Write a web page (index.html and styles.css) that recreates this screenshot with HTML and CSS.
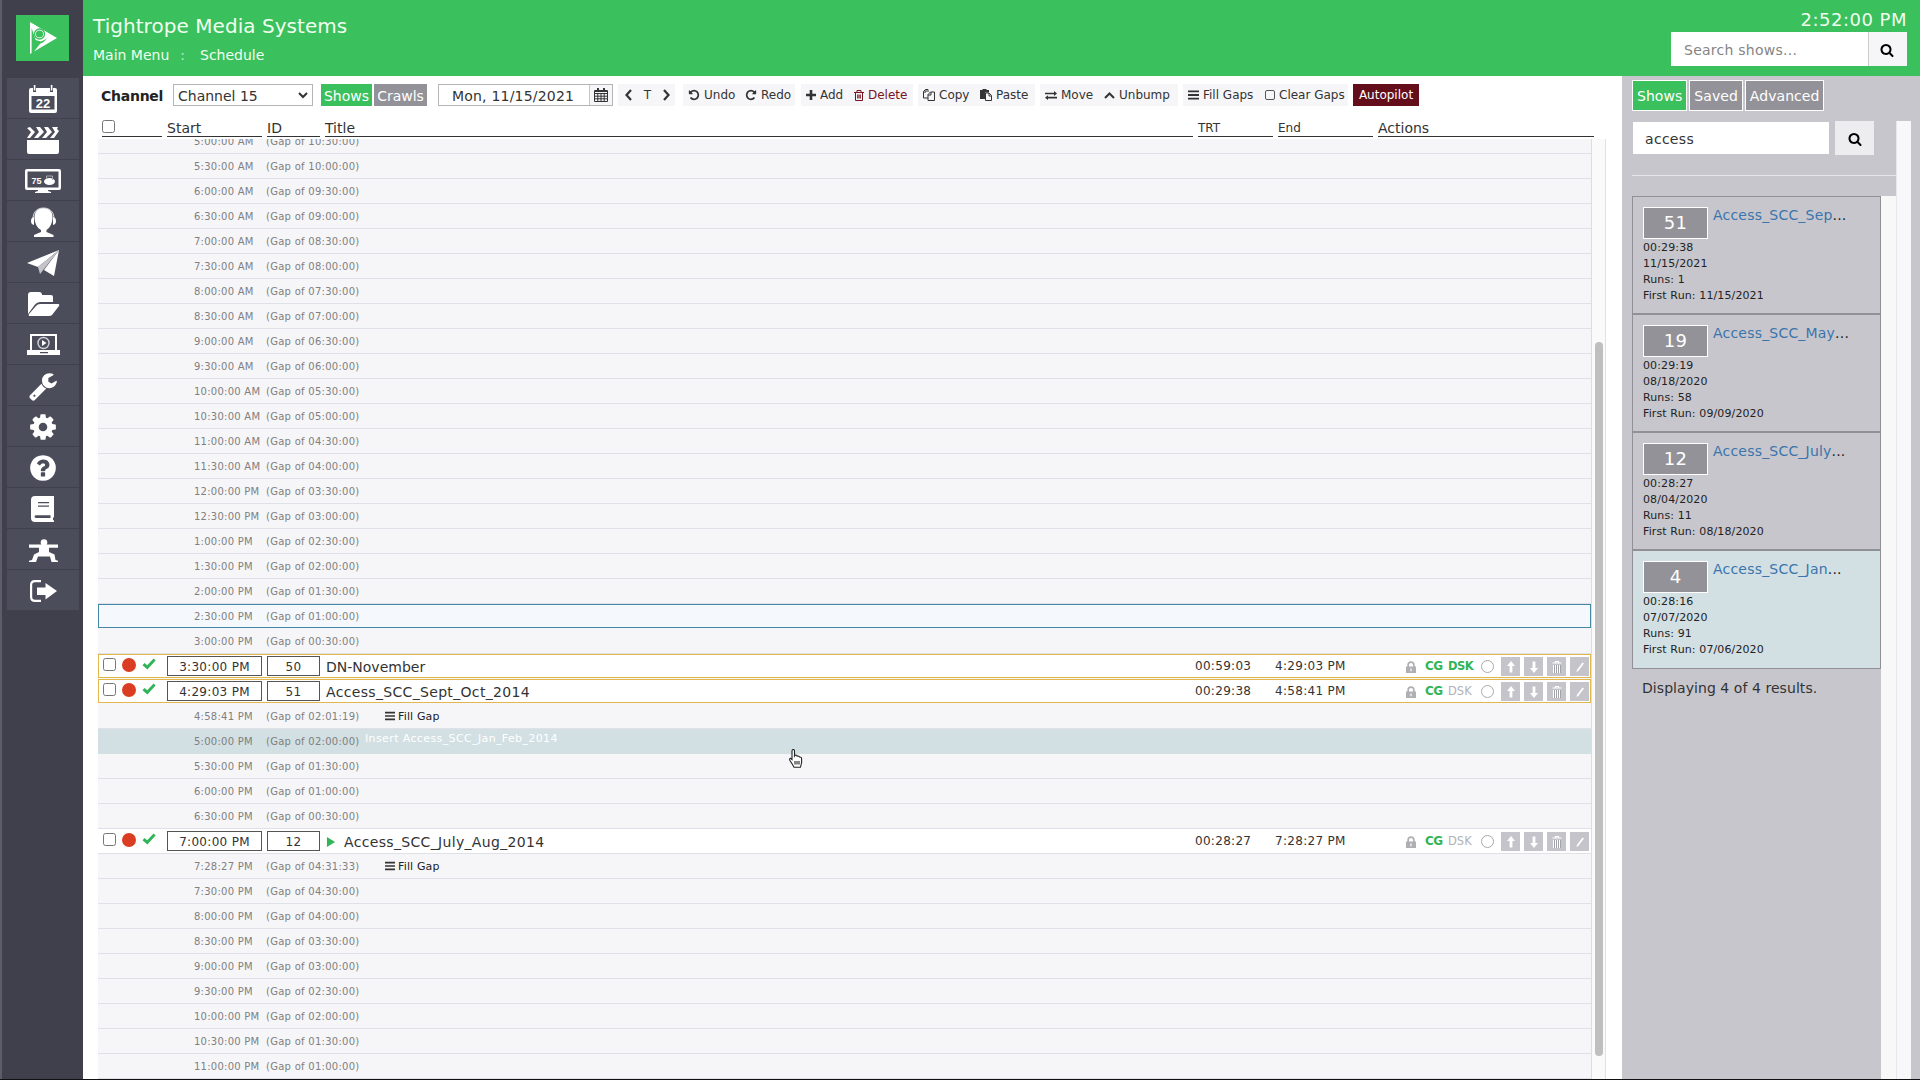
FILE: index.html
```
<!DOCTYPE html>
<html lang="en">
<head>
    <meta charset="UTF-8">
    <meta name="viewport" content="width=device-width, initial-scale=1.0">
    <title>Tightrope Media Systems - Schedule</title>
    <link rel="stylesheet" href="styles.css">
</head>
<body>
    <!-- Icon sprite -->
    <svg class="sprite" xmlns="http://www.w3.org/2000/svg">
        <symbol id="i-search" viewBox="0 0 1792 1792"><path d="M1216 832q0-185-131.5-316.5t-316.5-131.5-316.5 131.5-131.5 316.5 131.5 316.5 316.5 131.5 316.5-131.5 131.5-316.5zm512 832q0 52-38 90t-90 38q-54 0-90-38l-343-342q-179 124-399 124-143 0-273.5-55.5t-225-150-150-225-55.5-273.5 55.5-273.5 150-225 225-150 273.5-55.5 273.5 55.5 225 150 150 225 55.5 273.5q0 220-124 399l343 343q37 37 37 90z"/></symbol>
        <symbol id="i-undo" viewBox="0 0 1792 1792"><path d="M1664 896q0 156-61 298t-164 245-245 164-298 61q-172 0-327-72.5t-264-204.5q-7-10-6.5-22.5t8.5-20.5l137-138q10-9 25-9 16 2 23 12 73 95 179 147t225 52q104 0 198.5-40.5t163.5-109.5 109.5-163.5 40.5-198.5-40.5-198.5-109.5-163.5-163.5-109.5-198.5-40.5q-98 0-188 35.5t-160 101.5l137 138q31 30 14 69-17 40-59 40h-448q-26 0-45-19t-19-45v-448q0-42 40-59 39-17 69 14l130 129q107-101 244.5-156.5t284.5-55.5q156 0 298 61t245 164 164 245 61 298z"/></symbol>
        <symbol id="i-check" viewBox="0 0 14 12"><path d="M0.5 7.2 2.6 5l2.6 2.3L11.6 0.6 13.6 2.4 5.4 11.6z"/></symbol>
        <symbol id="i-lock" viewBox="0 0 10 12"><path fill-rule="evenodd" d="M0 5.5h1.3V4a3.7 3.7 0 0 1 7.4 0v1.5H10V12H0zM3 5.5h4V4a2 2 0 0 0-4 0zM4.4 7.5v2.8h1.2V7.5z"/></symbol>
        <symbol id="i-up" viewBox="0 0 10 12"><path d="M5 0 9 5H6.4v6.5H3.6V5H1z"/></symbol>
        <symbol id="i-trash-can" viewBox="0 0 10 12"><path d="M0.5 2h9M3.500 1.500v-1h3v1" fill="none" stroke="#fff" stroke-width="1.2"/><path d="M1.5 4v8M3.5 4v8M5.5 4v8M7.5 4v8" fill="none" stroke="#fff" stroke-width="1"/><path d="M2.5 4v8M4.5 4v8M6.5 4v8M8.5 4v8" fill="none" stroke="#8c8c92" stroke-width="0.6"/></symbol>
        <symbol id="i-edit" viewBox="0 0 10 12"><path d="M7.5 1.5 9 2.6 3.3 10 1.5 11l.4-2z"/></symbol>
        <symbol id="i-bars" viewBox="0 0 11 10"><path d="M0 0.4h11v1.8H0zM0 4.1h11v1.8H0zM0 7.8h11v1.8H0z"/></symbol>
        <symbol id="i-play" viewBox="0 0 9 11"><path d="M0 0 9 5.5 0 11z"/></symbol>
    </svg>

    <nav class="sidebar">
        <a class="logo" href="#">
            <svg width="28" height="33" viewBox="0 0 28 33"><path fill="#fff" d="M1 0 28 16 5 29.500 12.500 20 7 19 2.600 6V31L1 32z"/><circle cx="10.500" cy="12" r="5" fill="#fff" stroke="#3ac05c" stroke-width="1.300"/><circle cx="10.500" cy="12" r="3.600" fill="#3ac05c"/><path fill="#3ac05c" d="M3 17l9 2.500 6-3-4 4-9 3z"/></svg>
        </a>
        <ul class="menu">
            <li><svg width="30" height="28" viewBox="0 0 30 28"><path fill="#fff" fill-rule="evenodd" d="M3 3h2v4h3V3h14v4h3V3h2q2 0 2 2v21q0 2-2 2H3q-2 0-2-2V5q0-2 2-2zM3.500 11v13.500h23V11zM5.800 0h1.600v5.500H5.800zM22.800 0h1.600v5.500h-1.600z"/><text x="15" y="23" fill="#fff" class="cal-day">22</text></svg></li>
            <li><svg width="34" height="29" viewBox="0 0 34 29"><path fill="#fff" d="M1 14h32v12q0 2-2 2H3q-2 0-2-2zM1 2l3-1 5 5-5 6H1l4-6zM10 1h4l4 5-6 6H8l5-6zM18 1h4l4 5-6 6h-4l5-6zM26 1h6l-1 2 2 2-5 7h-4l5-6z"/></svg></li>
            <li><svg width="36" height="25" viewBox="0 0 36 25"><path fill="#fff" fill-rule="evenodd" d="M2 0h32q2 0 2 2v17q0 2-2 2H23v1l3 1v1H10v-1l3-1v-1H2q-2 0-2-2V2q0-2 2-2zM2.500 2.500v16h31v-16z"/><ellipse cx="24.500" cy="12.500" rx="5.500" ry="3.500" fill="#fff"/><path d="M21.500 10V7h6v4" fill="none" stroke="#a9a9b2"/><text x="11.500" y="15" fill="#fff" class="tv-temp">75</text></svg></li>
            <li><svg width="27" height="31" viewBox="0 0 27 31"><path fill="#fff" d="M13.500 1c6 0 9 4 9 9 0 6-2.500 11-6 13v2l7 3v2H4v-2l7-3v-2c-4-2-6.500-7-6.500-13 0-5 3-9 9-9z"/><path d="M3 12C3 4 8 1 13.500 1S24 4 24 12" fill="none" stroke="#dadade"/><path fill="#fff" d="M4 10v8q-3-.5-3-4t3-4zM23 10v8q3-.5 3-4t-3-4z"/></svg></li>
            <li><svg width="34" height="28" viewBox="0 0 34 28"><path fill="#fff" d="M33 1 28 27 18 21 33 1 12 18 1 14z"/><path fill="#c4c4ca" d="M33 1 12 18l2 7 4-5z"/></svg></li>
            <li><svg width="33" height="27" viewBox="0 0 33 27"><path fill="#fff" d="M1 23V4q0-3 3-3h8q3 0 3 3h9q2 0 2 2v5H13q-3 0-5 2.500z"/><path fill="#fff" d="M13 13h18q2 0 1 2l-7 9q-1 1-3 1H3q-2 0-1-2l7-8q1.500-2 4-2z"/></svg></li>
            <li><svg width="33" height="22" viewBox="0 0 33 22"><path fill="#fff" fill-rule="evenodd" d="M3 0h27v16h3v5H0v-5h3zM5 2v14h23V2zM13 18v1.200h8V18z"/><circle cx="16.500" cy="9" r="5.500" fill="none" stroke="#d0d0d6" stroke-width="1.400"/><path fill="#fff" d="M15 6l4.500 3-4.500 3z"/></svg></li>
            <li><svg width="30" height="30" viewBox="0 0 1792 1792"><path fill="#fff" d="M448 1472q0-26-19-45t-45-19-45 19-19 45 19 45 45 19 45-19 19-45zm644-420l-682 682q-37 37-90 37-52 0-91-37l-106-108q-38-36-38-90 0-53 38-91l681-681q39 98 114.500 173.500t173.500 114.500zm634-435q0 39-23 106-47 134-164.500 217.500t-258.500 83.500q-185 0-316.500-131.500t-131.500-316.500 131.500-316.500 316.500-131.500q58 0 121.500 16.500t107.500 46.500q16 11 16 28t-16 28l-293 169v224l193 107q5-3 79-48.500t135.500-81 70.500-35.500q15 0 23.500 10t8.500 25z"/></svg></li>
            <li><svg width="30" height="30" viewBox="0 0 1792 1792"><path fill="#fff" d="M1152 896q0-106-75-181t-181-75-181 75-75 181 75 181 181 75 181-75 75-181zm512-109v222q0 12-8 23t-20 13l-185 28q-19 54-39 91 35 50 107 138 10 12 10 25t-9 23q-27 37-99 108t-94 71q-12 0-26-9l-138-108q-44 23-91 38-16 136-29 186-7 28-36 28h-222q-14 0-24.500-8.500t-11.500-21.500l-28-184q-49-16-90-37l-141 107q-10 9-25 9-14 0-25-11-126-114-165-168-7-10-7-23 0-12 8-23 15-21 51-66.500t54-70.500q-27-50-41-99l-183-27q-13-2-21-12.500t-8-23.500v-222q0-12 8-23t19-13l186-28q14-46 39-92-40-57-107-138-10-12-10-24 0-10 9-23 26-36 98.500-107.500t94.500-71.500q13 0 26 10l138 107q44-23 91-38 16-136 29-186 7-28 36-28h222q14 0 24.500 8.500t11.500 21.500l28 184q49 16 90 37l142-107q9-9 24-9 13 0 25 10 129 119 165 170 7 8 7 22 0 12-8 23-15 21-51 66.500t-54 70.500q26 50 41 98l183 28q13 2 21 12.500t8 23.500z"/></svg></li>
            <li><svg width="30" height="30" viewBox="0 0 1792 1792"><path fill="#fff" d="M1024 1376v-192q0-14-9-23t-23-9h-192q-14 0-23 9t-9 23v192q0 14 9 23t23 9h192q14 0 23-9t9-23zm256-672q0-88-55.500-163t-138.500-116-170-41q-243 0-371 213-15 24 8 42l132 100q7 6 19 6 16 0 25-12 53-68 86-92 34-24 86-24 48 0 85.500 26t37.500 59q0 38-20 61t-68 45q-63 28-115.500 86.500t-52.500 125.500v36q0 14 9 23t23 9h192q14 0 23-9t9-23q0-19 21.500-49.500t54.500-49.500q32-18 49-28.500t46-35 44.500-48 28-60.500 12.500-81zm384 192q0 209-103 385.500t-279.500 279.500-385.500 103-385.500-103-279.500-279.500-103-385.500 103-385.500 279.500-279.500 385.500-103 385.500 103 279.500 279.500 103 385.500z"/></svg></li>
            <li><svg width="24" height="26" viewBox="0 0 24 26"><path fill="#fff" fill-rule="evenodd" d="M4 0h19v21l-1 1v2l1 .5V26H4q-4 0-4-4V4q0-4 4-4zM7 6v1.300h11V6zM7 9.500v1.300h11V9.500zM5.500 19.300q-2 0-2 1.200 0 1.500 2 1.500h14v-2.700z"/></svg></li>
            <li><svg width="29" height="23" viewBox="0 0 29 23"><circle cx="15" cy="3.500" r="3.300" fill="#fff"/><path fill="#fff" d="M0 5.500h29v3.300h-9V13l5.500 2.500 1 5.500 3 .8V23h-7l-1.500-5.500H9L7 23H0v-1.200l3-.8 2-5.500 5-2.500V8.800H0z"/></svg></li>
            <li><svg width="27" height="22" viewBox="0 0 27 22"><path fill="none" stroke="#fff" stroke-width="2.200" d="M11 1.100H5q-3.900 0-3.900 3.900v12q0 3.900 3.900 3.900h6"/><path fill="#fff" d="M7 7.500h8.500V3L27 11 15.500 19.500V15H7z"/></svg></li>
        </ul>
    </nav>

    <div class="page">
        <header class="topbar">
            <div class="branding">
                <h1>Tightrope Media Systems</h1>
                <p class="crumbs"><span>Main Menu</span><span class="sep">:</span><span>Schedule</span></p>
            </div>
            <div class="topbar-right">
                <div class="clock">2:52:00 PM</div>
                <div class="show-search">
                    <input type="text" placeholder="Search shows...">
                    <button type="button"><svg width="14" height="14"><use href="#i-search"/></svg></button>
                </div>
            </div>
        </header>

        <div class="content">
            <main class="schedule">
                <div class="toolbar">
                    <label>Channel</label>
                    <div class="select"><span>Channel 15</span><svg width="10" height="7" viewBox="0 0 10 7"><path d="M1 1l4 4 4-4" fill="none" stroke="#333" stroke-width="2"/></svg></div>
                    <button class="tab active shows">Shows</button>
                    <button class="tab crawls">Crawls</button>
                    <div class="date">
                        <span>Mon, 11/15/2021</span>
                        <i><svg width="14" height="14" viewBox="0 0 14 14"><path fill="none" stroke="#333" d="M.5 2.500h13v11H.5zM.5 5.500h13M.5 8.200h13M.5 10.800h13M3.800 5v8.500M7 5v8.500M10.200 5v8.500"/><path stroke="#333" stroke-width="2" d="M4 0v4M10 0v4M1 3h12"/></svg></i>
                    </div>
                    <div class="group nav">
                        <svg width="7" height="12" viewBox="0 0 7 12"><path d="M6 1 1.500 6 6 11" fill="none" stroke="#333" stroke-width="2.200"/></svg>
                        <span>T</span>
                        <svg width="7" height="12" viewBox="0 0 7 12"><path d="M1 1l4.500 5L1 11" fill="none" stroke="#333" stroke-width="2.200"/></svg>
                    </div>
                    <div class="group g-undo">
                        <span class="w56"><svg width="12" height="12"><use href="#i-undo"/></svg>Undo</span>
                        <span><svg class="flip" width="12" height="12"><use href="#i-undo"/></svg>Redo</span>
                    </div>
                    <div class="group g-add">
                        <span class="w48"><svg width="10" height="10" viewBox="0 0 10 10"><path d="M3.700 0h2.600v3.700H10v2.600H6.300V10H3.700V6.300H0V3.700h3.700z"/></svg>Add</span>
                        <span class="danger"><svg width="10" height="11" viewBox="0 0 10 11"><path fill="none" stroke="#7a1420" d="M0 2.500h10M3 2.500v-2h4v2M1.500 2.500v8h7v-8M3.700 4.500v4M5 4.500v4M6.300 4.500v4"/></svg>Delete</span>
                    </div>
                    <div class="group g-copy">
                        <span class="w57"><svg width="12" height="12" viewBox="0 0 12 12"><path class="outline" d="M5 3V.5H2.500l-2 2V9H5M3 .5V3H.5M7.500 3h4v8.500H5V5.500zM8 3v3H5"/></svg>Copy</span>
                        <span><svg width="12" height="12" viewBox="0 0 12 12"><path d="M0 1h2.500V0h4v1H9v2.500H5V10H0z"/><path class="outline" d="M5.500 4H9l2.500 2.500v5h-6zM9 4v3h2.500"/></svg>Paste</span>
                    </div>
                    <div class="group g-move">
                        <span class="w59"><svg width="12" height="9" viewBox="0 0 12 9"><path d="M0 1.700h9V0l3 2.500L9 5V3.300H0zM12 5.800H3V4.300L0 6.700 3 9V7.400h9z"/></svg>Move</span>
                        <span><svg width="11" height="7" viewBox="0 0 11 7"><path d="M1 6l4.500-4.500L10 6" fill="none" stroke="#333" stroke-width="2"/></svg>Unbump</span>
                    </div>
                    <div class="group g-gaps">
                        <span class="w77"><svg width="11" height="10"><use href="#i-bars"/></svg>Fill Gaps</span>
                        <span><svg width="10" height="10" viewBox="0 0 10 10"><rect x=".5" y=".5" width="9" height="9" rx="1.500" fill="none" stroke="#555"/></svg>Clear Gaps</span>
                    </div>
                    <button class="autopilot">Autopilot</button>
                </div>

                <div class="cols head">
                    <div><input type="checkbox"></div>
                    <div>Start</div>
                    <div>ID</div>
                    <div>Title</div>
                    <div class="small">TRT</div>
                    <div class="small">End</div>
                    <div>Actions</div>
                </div>

                <div class="scroller">
                    <div class="rows" id="rows"></div>
                    <div class="track"><div class="thumb"></div></div>
                </div>
            </main>

            <aside class="panel">
                <div class="tabs">
                    <button class="active">Shows</button>
                    <button>Saved</button>
                    <button>Advanced</button>
                </div>
                <div class="panel-body">
                    <div class="panel-main">
                        <div class="filter">
                            <input type="text" value="access">
                            <button type="button"><svg width="14" height="14"><use href="#i-search"/></svg></button>
                        </div>
                        <div class="results">
                            <div class="cards">
                                <div class="card">
                                    <div class="card-top"><b>51</b><a>Access_SCC_Sep</a>...</div>
                                    <p>00:29:38</p><p>11/15/2021</p><p>Runs: 1</p><p>First Run: 11/15/2021</p>
                                </div>
                                <div class="card">
                                    <div class="card-top"><b>19</b><a>Access_SCC_May</a>...</div>
                                    <p>00:29:19</p><p>08/18/2020</p><p>Runs: 58</p><p>First Run: 09/09/2020</p>
                                </div>
                                <div class="card">
                                    <div class="card-top"><b>12</b><a>Access_SCC_July</a>...</div>
                                    <p>00:28:27</p><p>08/04/2020</p><p>Runs: 11</p><p>First Run: 08/18/2020</p>
                                </div>
                                <div class="card selected">
                                    <div class="card-top"><b>4</b><a>Access_SCC_Jan</a>...</div>
                                    <p>00:28:16</p><p>07/07/2020</p><p>Runs: 91</p><p>First Run: 07/06/2020</p>
                                </div>
                                <div class="count">Displaying 4 of 4 results.</div>
                            </div>
                            <div class="inner-track"></div>
                        </div>
                    </div>
                    <div class="outer-track"></div>
                </div>
            </aside>
        </div>
    </div>

    <svg class="pointer" width="14" height="19" viewBox="0 0 14 19"><path fill="#fff" stroke="#222" stroke-width="1.100" d="M3 2q0-1.500 1.200-1.500T5.500 2v5l.5-.8q2-.4 2.200.9 1.800-.3 2.200.9 2.200-.2 2.200 1.800v4l-1.200 4.500H5L3.500 15.500.8 11.200Q.2 9.500 1.600 9.300L3 10.500zM6 12v3.500M8 12v3.500M10 12v3.500"/></svg>

    <script src="script.js"></script>
</body>
</html>
```
FILE: styles.css
```
* {
    box-sizing: border-box;
}

body {
    font-family: Verdana, "DejaVu Sans", sans-serif;
    margin: 0;
    display: flex;
    width: 1920px;
    height: 1080px;
    overflow: hidden;
    color: #333;
    background-color: #fff;
    border-bottom: 1px solid #111;
}

button, input {
    font-family: inherit;
}

h1, p, ul {
    margin: 0;
    padding: 0;
}

.sprite {
    position: absolute;
    width: 0;
    height: 0;
}

/* Sidebar */
.sidebar {
    width: 83px;
    background-color: #40404d;
    border-left: 2px solid #5b5d6b;
    padding-top: 15px;
}

.logo {
    display: flex;
    align-items: center;
    justify-content: center;
    width: 53px;
    height: 46px;
    margin-left: 14px;
    margin-bottom: 17px;
    background-color: #3ac05c;
}

.menu {
    list-style: none;
    margin-left: 5px;
    width: 72px;
}

.menu li {
    display: flex;
    align-items: center;
    justify-content: center;
    height: 41px;
    padding-top: 2px;
    background-color: #4c4d5b;
    border-bottom: 1px solid #40414d;
}

.cal-day {
    font: bold 13px "Liberation Sans", sans-serif;
    text-anchor: middle;
}

.tv-temp {
    font: bold 9px "Liberation Sans", sans-serif;
    text-anchor: middle;
}

.page {
    width: 1837px;
    display: flex;
    flex-direction: column;
}

/* Header */
.topbar {
    display: flex;
    justify-content: space-between;
    height: 76px;
    flex-shrink: 0;
    padding: 0 13px 0 10px;
    background-color: #3ac05c;
    color: #effff0;
}

.topbar h1 {
    font-size: 20px;
    font-weight: normal;
    line-height: 24px;
    margin-top: 14px;
    letter-spacing: 0.05px;
}

.crumbs {
    font-size: 14px;
    line-height: 18px;
    margin-top: 8px;
}

.crumbs .sep {
    margin: 0 15px 0 11px;
    opacity: 0.7;
}

.clock {
    font-size: 18px;
    line-height: 22px;
    margin-top: 9px;
    text-align: right;
    letter-spacing: 0.5px;
}

.show-search {
    display: flex;
    height: 34px;
    width: 236px;
    margin-top: 1px;
    margin-left: auto;
}

.show-search input {
    width: 197px;
    border: none;
    padding: 2px 13px 0;
    font-size: 14px;
    letter-spacing: 0.25px;
}

.show-search input::placeholder {
    color: #858585;
}

.show-search button {
    width: 39px;
    padding: 0 2px 0 0;
    border: none;
    border-left: 1px solid #ccc;
    background-color: #f6f6f9;
}

.show-search svg, .filter svg {
    vertical-align: middle;
}

.content {
    display: flex;
    flex: 1;
    min-height: 0;
}

/* Schedule */
.schedule {
    width: 1539px;
    display: flex;
    flex-direction: column;
}

.toolbar {
    display: flex;
    height: 22px;
    margin: 8px 0 0 18px;
    font-size: 12px;
    line-height: 22px;
    white-space: nowrap;
    flex-shrink: 0;
}

.toolbar label {
    font-size: 14px;
    font-weight: bold;
    width: 72px;
    line-height: 24px;
    letter-spacing: -0.25px;
    color: #222;
}

.select {
    display: flex;
    align-items: center;
    justify-content: space-between;
    width: 140px;
    padding: 1px 4px 0;
    border: 1px solid #b5b5b5;
    font-size: 14px;
}

.tab {
    padding: 1px 0 0;
    border: none;
    background-color: #939298;
    color: #fff;
    font-size: 14px;
}

.tab.active {
    background-color: #3ac05c;
}

.shows {
    width: 51px;
    margin: 0 2px 0 8px;
}

.crawls {
    width: 53px;
}

.date {
    display: flex;
    width: 175px;
    margin-left: 11px;
    border: 1px solid #b5b5b5;
    font-size: 14px;
}

.date span {
    flex: 1;
    padding-left: 13px;
    letter-spacing: 0.2px;
}

.date i {
    display: flex;
    align-items: center;
    justify-content: center;
    width: 23px;
    border-left: 1px solid #c5c5c5;
    background-color: #f6f6f9;
}

.group {
    display: flex;
    background-color: #f6f6f9;
    padding-left: 5px;
    line-height: 21px;
    margin-left: 5px;
}

.group span {
    display: flex;
    align-items: center;
    gap: 4px;
}

.group .danger {
    color: #7a1420;
}

.group svg, .fill-gap svg {
    fill: #333;
}

.group .outline {
    fill: none;
    stroke: #333;
}

.group .flip {
    transform: scaleX(-1);
}

.nav {
    align-items: center;
    justify-content: space-between;
    width: 57px;
    padding: 0 5px 0 7px;
}

.g-undo {
    width: 112px;
    margin-left: 8px;
}

.g-add {
    width: 112px;
    margin-left: 6px;
}

.g-copy {
    width: 117px;
}

.g-move {
    width: 138px;
}

.g-gaps {
    width: 165px;
}

.w48 { width: 48px; }
.w56 { width: 57px; }
.w57 { width: 57px; }
.w59 { width: 59px; }
.w77 { width: 77px; }

.autopilot {
    width: 66px;
    margin-left: 5px;
    padding: 0;
    border: none;
    background-color: #640d1b;
    color: #fff;
    font-size: 12px;
}

/* Column grid is shared by the head and the show rows */
.cols {
    display: grid;
    grid-template-columns: 60px 95px 53px 868px 75px 95px 216px;
    column-gap: 5px;
}

.head {
    height: 22px;
    margin: 9px 0 0 19px;
    flex-shrink: 0;
}

.head div {
    height: 22px;
    border-bottom: 1px solid #333;
    font-size: 14px;
    line-height: 27px;
}

.head .small {
    font-size: 12px;
}

input[type="checkbox"] {
    display: block;
    width: 13px;
    height: 13px;
    margin: 5px 0 0;
}

.scroller {
    display: flex;
    flex: 1;
    min-height: 0;
    margin: 2px 0 0 15px;
    width: 1508px;
    background-color: #f6f6f9;
}

.rows {
    width: 1494px;
    overflow: hidden;
    border-right: 1px solid #dcdce4;
}

.slot {
    display: flex;
    position: relative;
    height: 25px;
    border-bottom: 1px solid #e0e0e8;
    color: #808080;
    font-size: 10px;
    line-height: 26px;
}

/* list is scrolled part way through the first slot */
.slot:first-child {
    margin-top: -10px;
}

.slot time {
    margin-left: 96px;
    width: 72px;
    letter-spacing: 0.25px;
}

.slot .gap {
    letter-spacing: 0.27px;
    width: 119px;
}

.slot.now {
    height: 24px;
    margin-bottom: 1px;
    border: 1px solid #4786a5;
    background-color: #f5f8fc;
    line-height: 24px;
}

.slot.now time {
    margin-left: 95px;
}

.slot.target {
    background-color: #d2dfe3;
    border-color: #d2dfe3;
}

.slot .insert {
    position: absolute;
    left: 267px;
    top: -3px;
    color: #fff;
    font-size: 11px;
    letter-spacing: 0.38px;
}

.fill-gap {
    display: flex;
    align-items: center;
    gap: 3px;
    color: #222;
    font-size: 11px;
    line-height: 25px;
    letter-spacing: 0.15px;
}

.show {
    height: 25px;
    padding-left: 4px;
    border-bottom: 1px solid #e0e0e8;
    background-color: #fff;
    font-size: 12px;
    line-height: 25px;
    color: #333;
}

.show.locked {
    height: 24px;
    margin-bottom: 1px;
    padding-left: 3px;
    border: 1px solid #e2b84e;
}

.show.locked > * {
    margin-top: -1px;
}

.state {
    display: flex;
    gap: 6px;
    padding-top: 4px;
    height: 18px;
}

.state input[type="checkbox"] {
    margin: 0 0 0 1px;
}

.state .dot {
    width: 14px;
    height: 14px;
    border-radius: 50%;
    background-color: #da3d22;
}

.state svg {
    fill: #31b558;
}

.box {
    height: 20px;
    margin-top: 2px;
    border: 1px solid #555;
    text-align: center;
    line-height: 20px;
    letter-spacing: 0.3px;
}

.show.locked .box {
    margin-top: 1px;
}

.title {
    font-size: 14px;
    line-height: 26px;
    padding-left: 1px;
}

/* file style names run a little wider */
.title.wide {
    letter-spacing: 0.33px;
}

.title svg {
    fill: #31b558;
    margin-right: 8px;
}

.trt, .end {
    position: relative;
    left: -3px;
    letter-spacing: 0.3px;
}

.actions {
    display: flex;
    align-items: center;
    height: 25px;
    padding-left: 28px;
    color: #b2b2b8;
}

.actions .lock {
    fill: #b0b0b4;
    width: 10px;
    margin-right: 9px;
}

.actions .on {
    color: #31b558;
    font-weight: bold;
    letter-spacing: -0.6px;
}

.actions .cg {
    width: 23px;
}

.actions .dsk {
    width: 33px;
    font-size: 11.5px;
}

.actions .ring {
    width: 13px;
    height: 13px;
    border: 1px solid #aaa;
    border-radius: 50%;
    margin-right: 7px;
}

.actions .btn {
    display: flex;
    align-items: center;
    justify-content: center;
    width: 19px;
    height: 19px;
    margin-right: 4px;
    flex-shrink: 0;
    background-color: #c4c4ca;
}

.btn svg {
    fill: #fff;
}

.btn .down {
    transform: rotate(180deg);
}

.track {
    width: 14px;
    padding: 203px 0 0 3px;
    border-right: 1px solid #e2e2e6;
    background-color: #fafafa;
}

.thumb {
    width: 8px;
    height: 714px;
    border-radius: 4px;
    background-color: #bfbfbf;
}

/* Show search panel */
.panel {
    width: 298px;
    display: flex;
    flex-direction: column;
    background-color: #c7c6cc;
}

.tabs {
    display: flex;
    gap: 2px;
    margin: 4px 0 0 10px;
}

.tabs button {
    height: 31px;
    padding: 1px 4px 0;
    border: 1px solid #fff;
    background-color: #939298;
    color: #fff;
    font-size: 14px;
    letter-spacing: 0.05px;
}

.tabs .active {
    background-color: #3ac05c;
}

.panel-body {
    display: flex;
    flex: 1;
    min-height: 0;
    margin-top: 10px;
}

.panel-main {
    width: 274px;
    display: flex;
    flex-direction: column;
}

.filter {
    display: flex;
    gap: 6px;
    height: 55px;
    margin-left: 10px;
    padding-left: 1px;
    border-bottom: 1px solid #e6e6ea;
}

.filter input {
    width: 196px;
    height: 32px;
    margin-top: 1px;
    padding: 2px 12px 0;
    border: none;
    font-size: 14px;
    letter-spacing: 0.3px;
    color: #333;
}

.filter button {
    width: 39px;
    height: 34px;
    border: none;
    background-color: #ededef;
}

.results {
    display: flex;
    flex: 1;
    min-height: 0;
    margin-top: 20px;
}

.cards {
    width: 259px;
    padding-left: 10px;
}

.card {
    height: 118px;
    padding: 10px;
    border: 1px solid #909096;
    font-size: 11px;
    line-height: 16px;
    letter-spacing: 0.12px;
    color: #222;
}

.card:nth-last-child(2) {
    height: 119px;
}

.card.selected {
    background-color: #d2dfe3;
}

.card-top {
    display: flex;
    height: 33px;
    font-size: 14px;
    letter-spacing: 0.2px;
}

.card-top b {
    width: 65px;
    height: 32px;
    margin-right: 5px;
    border: 1px solid #fff;
    background-color: #939298;
    color: #fff;
    font-size: 18px;
    font-weight: normal;
    line-height: 30px;
    text-align: center;
}

.card-top a {
    color: #3a75ad;
}

.count {
    padding: 10px 10px;
    font-size: 14px;
    line-height: 18px;
    letter-spacing: 0.06px;
}

.inner-track {
    width: 15px;
    background-color: #f8f8f8;
}

.outer-track {
    width: 15px;
    background-color: #f8f8fa;
    border-left: 1px solid #e8e8ea;
}

.pointer {
    position: absolute;
    left: 789px;
    top: 749px;
}
```
FILE: script.js
```
var icon = function (name, w, h, cls) {
    return '<svg class="' + (cls || '') + '" width="' + w + '" height="' + h + '"><use href="#i-' + name + '"/></svg>';
};

// One gap slot: start time, remaining gap, optional row class and extra content
function slot(time, gap, cls, extra) {
    return '<div class="slot ' + (cls || '') + '"><time>' + time + '</time>' +
        '<span class="gap">(Gap of ' + gap + ')</span>' + (extra || '') + '</div>';
}

// One scheduled show
function show(s) {
    return '<div class="cols show ' + (s.locked ? 'locked' : '') + '">' +
        '<div class="state"><input type="checkbox"><span class="dot"></span>' + icon('check', 14, 12) + '</div>' +
        '<div class="box">' + s.start + '</div>' +
        '<div class="box">' + s.id + '</div>' +
        '<div class="title ' + (s.title.indexOf('_') > 0 ? 'wide' : '') + '">' + (s.playing ? icon('play', 10, 10) : '') + s.title + '</div>' +
        '<div class="trt">' + s.trt + '</div>' +
        '<div class="end">' + s.end + '</div>' +
        '<div class="actions">' + icon('lock', 10, 12, 'lock') +
        '<span class="cg on">CG</span><span class="dsk ' + (s.dsk ? 'on' : '') + '">DSK</span><span class="ring"></span>' +
        '<span class="btn">' + icon('up', 10, 12) + '</span>' +
        '<span class="btn">' + icon('up', 10, 12, 'down') + '</span>' +
        '<span class="btn">' + icon('trash-can', 10, 12) + '</span>' +
        '<span class="btn">' + icon('edit', 10, 12) + '</span></div></div>';
}

function pad(n) {
    return (n < 10 ? '0' : '') + n;
}

// Half hour slots from one time to another (minutes of the day), counting down to gapEnd
function slots(from, to, gapEnd, marks) {
    var html = '';
    for (var m = from; m <= to; m += 30) {
        var h = Math.floor(m / 60);
        var left = gapEnd - m;
        var time = ((h + 11) % 12 + 1) + ':' + pad(m % 60) + ':00 ' + (h < 12 ? 'AM' : 'PM');
        var mark = (marks && marks[m]) || {};
        html += slot(time, pad(Math.floor(left / 60)) + ':' + pad(left % 60) + ':00', mark.cls, mark.extra);
    }
    return html;
}

var fillGap = '<span class="fill-gap">' + icon('bars', 10, 10) + 'Fill Gap</span>';

document.getElementById('rows').innerHTML =
    slots(300, 900, 930, { 870: { cls: 'now' } }) +
    show({ start: '3:30:00 PM', id: 50, title: 'DN-November', trt: '00:59:03', end: '4:29:03 PM', locked: true, dsk: true }) +
    show({ start: '4:29:03 PM', id: 51, title: 'Access_SCC_Sept_Oct_2014', trt: '00:29:38', end: '4:58:41 PM', locked: true }) +
    slot('4:58:41 PM', '02:01:19', '', fillGap) +
    slots(1020, 1110, 1140, { 1020: { cls: 'target', extra: '<span class="insert">Insert Access_SCC_Jan_Feb_2014</span>' } }) +
    show({ start: '7:00:00 PM', id: 12, title: 'Access_SCC_July_Aug_2014', trt: '00:28:27', end: '7:28:27 PM', playing: true }) +
    slot('7:28:27 PM', '04:31:33', '', fillGap) +
    slots(1170, 1380, 1440, null);
```
